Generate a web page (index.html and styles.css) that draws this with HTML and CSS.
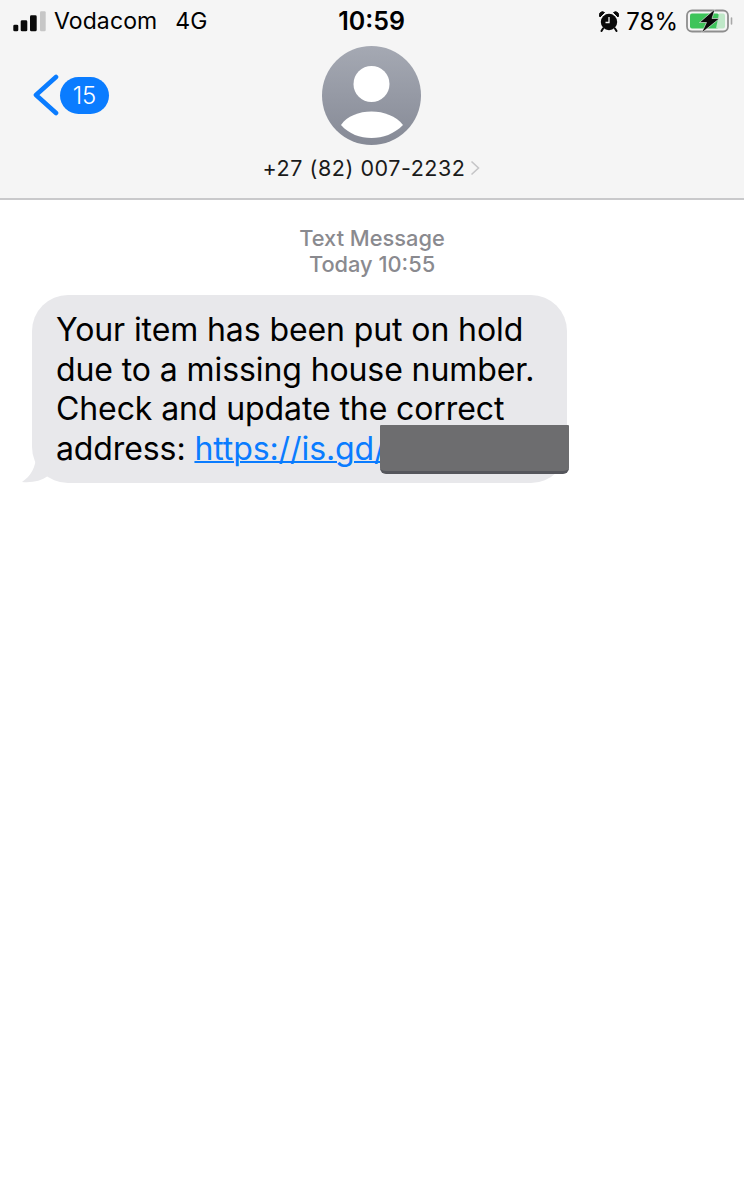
FILE: index.html
```html
<!DOCTYPE html>
<html lang="en">
<head>
<meta charset="utf-8">
<title>Text Message</title>
<link rel="stylesheet" href="styles.css">
</head>
<body>
<header class="top">
  <div class="status">
    <div class="status-left">
      <svg class="signal" width="33" height="21" viewBox="0 0 33 21">
        <rect x="0.3" y="13.7" width="5" height="6.6" rx="1.4" fill="#0a0a0a"/>
        <rect x="7.7" y="9.3" width="6.6" height="11" rx="1.4" fill="#0a0a0a"/>
        <rect x="17" y="4.3" width="6.7" height="16" rx="1.4" fill="#0a0a0a"/>
        <rect x="27" y="0.3" width="5.7" height="20" rx="1.2" fill="#c6c6c6"/>
      </svg>
      <span class="carrier">Vodacom</span>
      <span class="net">4G</span>
    </div>
    <div class="clock">10:59</div>
    <div class="status-right">
      <svg class="alarm" width="20" height="21" viewBox="0 0 20 21">
        <circle cx="10" cy="11" r="8.2" fill="#0a0a0a"/>
        <path d="M1 6 L5.5 1.5 A3.2 3.2 0 0 0 1 6Z M19 6 L14.5 1.5 A3.2 3.2 0 0 1 19 6Z" fill="#0a0a0a" stroke="#0a0a0a"/>
        <path d="M4 17.5 L2.5 20 M16 17.5 L17.5 20" stroke="#0a0a0a" stroke-width="2" stroke-linecap="round"/>
        <path d="M10 6 V11.5 H6.5" fill="none" stroke="#f4f4f4" stroke-width="1.3"/>
      </svg>
      <span class="pct">78%</span>
      <svg class="battery" width="47" height="24" viewBox="0 0 47 24">
        <rect x="1" y="1.5" width="41" height="21" rx="5" fill="none" stroke="#8e8e8e" stroke-width="1.8"/>
        <rect x="4" y="4.5" width="29" height="15" rx="2" fill="#3dc45a"/>
        <path d="M33 4.5 H37 A2 2 0 0 1 39 6.5 V17.5 A2 2 0 0 1 37 19.5 H30Z" fill="#bfe8c8"/>
        <path d="M45.5 9 V15" stroke="#a8a8a8" stroke-width="1.6" stroke-linecap="round"/>
        <path d="M29 0 L13.5 13.5 H20.5 L15.5 24 L33.5 9.5 H26 Z" fill="#0a0a0a" stroke="#f4f4f4" stroke-width="0.6"/>
      </svg>
    </div>
  </div>
  <div class="nav">
    <div class="back">
      <svg class="chevron" width="28" height="42" viewBox="0 0 28 42">
        <path d="M24 3 L4 21 L24 39" fill="none" stroke="#0a7cff" stroke-width="4.6" stroke-linecap="round" stroke-linejoin="round"/>
      </svg>
      <span class="badge">15</span>
    </div>
    <div class="contact">
      <svg class="avatar" width="99" height="99" viewBox="0 0 99 99">
        <defs>
          <linearGradient id="avatarFill" x1="0" y1="0" x2="0" y2="1">
            <stop offset="0" stop-color="#a5a9b3"/>
            <stop offset="1" stop-color="#868a96"/>
          </linearGradient>
        </defs>
        <circle cx="49.5" cy="49.5" r="49.5" fill="url(#avatarFill)"/>
        <circle cx="49.5" cy="38" r="18" fill="#fff"/>
        <path d="M19 79 C25 70 37 65.5 49.5 65.5 C62 65.5 74 70 81 79 C72 88 61 92 49.5 92 C38 92 27 88 19 79Z" fill="#fff"/>
      </svg>
      <div class="number">
        <span>+27 (82) 007-2232</span>
        <svg class="disclosure" width="10" height="16" viewBox="0 0 10 16">
          <path d="M1.5 1.5 L8.5 8 L1.5 14.5" fill="none" stroke="#c5c5c7" stroke-width="1.6"/>
        </svg>
      </div>
    </div>
  </div>
</header>
<main class="thread">
  <div class="stamp">
    <div>Text Message</div>
    <div>Today 10:55</div>
  </div>
  <div class="bubble">
    <svg class="tail" width="30" height="28" viewBox="0 0 30 28">
      <path d="M14 0 C14 12 9 21 0 27 C10 28 19 26 26 21 L30 0Z" fill="#e8e8eb"/>
    </svg>
    <p class="body">Your item has been put on hold due to a missing house number. Check and update the correct address: <a class="link" href="#">https://is.gd/</a></p>
    <div class="redact"></div>
  </div>
</main>
</body>
</html>
```

FILE: styles.css
```css
* { box-sizing: border-box; }
html, body { margin: 0; padding: 0; }
body {
  width: 744px;
  height: 1200px;
  background: #fff;
  color: #000;
  font-family: Inter, "Liberation Sans", sans-serif;
  overflow: hidden;
}
.top {
  height: 200px;
  background: #f5f5f5;
  border-bottom: 2px solid #c9c9cb;
}
.status {
  display: grid;
  grid-template-columns: 1fr auto 1fr;
  align-items: center;
  height: 42px;
  padding: 0 11px 0 13px;
}
.status-left, .status-right { display: flex; align-items: center; }
.status-right { justify-content: flex-end; }
.signal { margin-right: 8px; }
.carrier { font-size: 23px; letter-spacing: 0.1px; }
.net { font-size: 23px; margin-left: 18px; }
.clock { font-size: 25px; font-weight: 600; margin-right: 3px; }
.alarm { margin-right: 7px; }
.pct { font-size: 24px; margin-right: 8px; }
.nav {
  position: relative;
  display: flex;
  justify-content: center;
  padding-top: 4px;
}
.back {
  position: absolute;
  left: 32px;
  top: 32px;
  display: flex;
  align-items: center;
}
.badge {
  width: 49px;
  height: 37px;
  border-radius: 18.5px;
  background: #0a7cff;
  color: #fff;
  font-size: 24px;
  font-weight: 300;
  display: flex;
  align-items: center;
  justify-content: center;
}
.contact { display: flex; flex-direction: column; align-items: center; margin-right: 1px; }
.avatar { display: block; }
.number {
  display: flex;
  align-items: center;
  gap: 5px;
  margin-top: 10px;
  font-size: 21.5px;
  line-height: 26px;
  letter-spacing: 0.55px;
  color: #1a1a1a;
}
.thread { padding-top: 25px; }
.stamp {
  text-align: center;
  color: #8a8a8f;
  font-size: 21.8px;
  line-height: 26px;
  font-weight: 500;
}
.bubble {
  position: relative;
  width: 535px;
  height: 188px;
  margin: 18px 0 0 32px;
  padding: 15px 24px 0;
  background: #e8e8eb;
  border-radius: 36px;
}
.tail { position: absolute; left: -10px; bottom: 0; }
.body {
  position: relative;
  margin: 0;
  font-size: 32px;
  line-height: 39.6px;
  letter-spacing: -0.1px;
}
.link { color: #0a7cff; text-decoration: underline; text-decoration-thickness: 2px; }
.redact {
  position: absolute;
  left: 348px;
  top: 130px;
  width: 189px;
  height: 49px;
  background: #6d6d6f;
  border-bottom: 3px solid #55565c;
  border-radius: 1px 1px 6px 6px;
}
```
